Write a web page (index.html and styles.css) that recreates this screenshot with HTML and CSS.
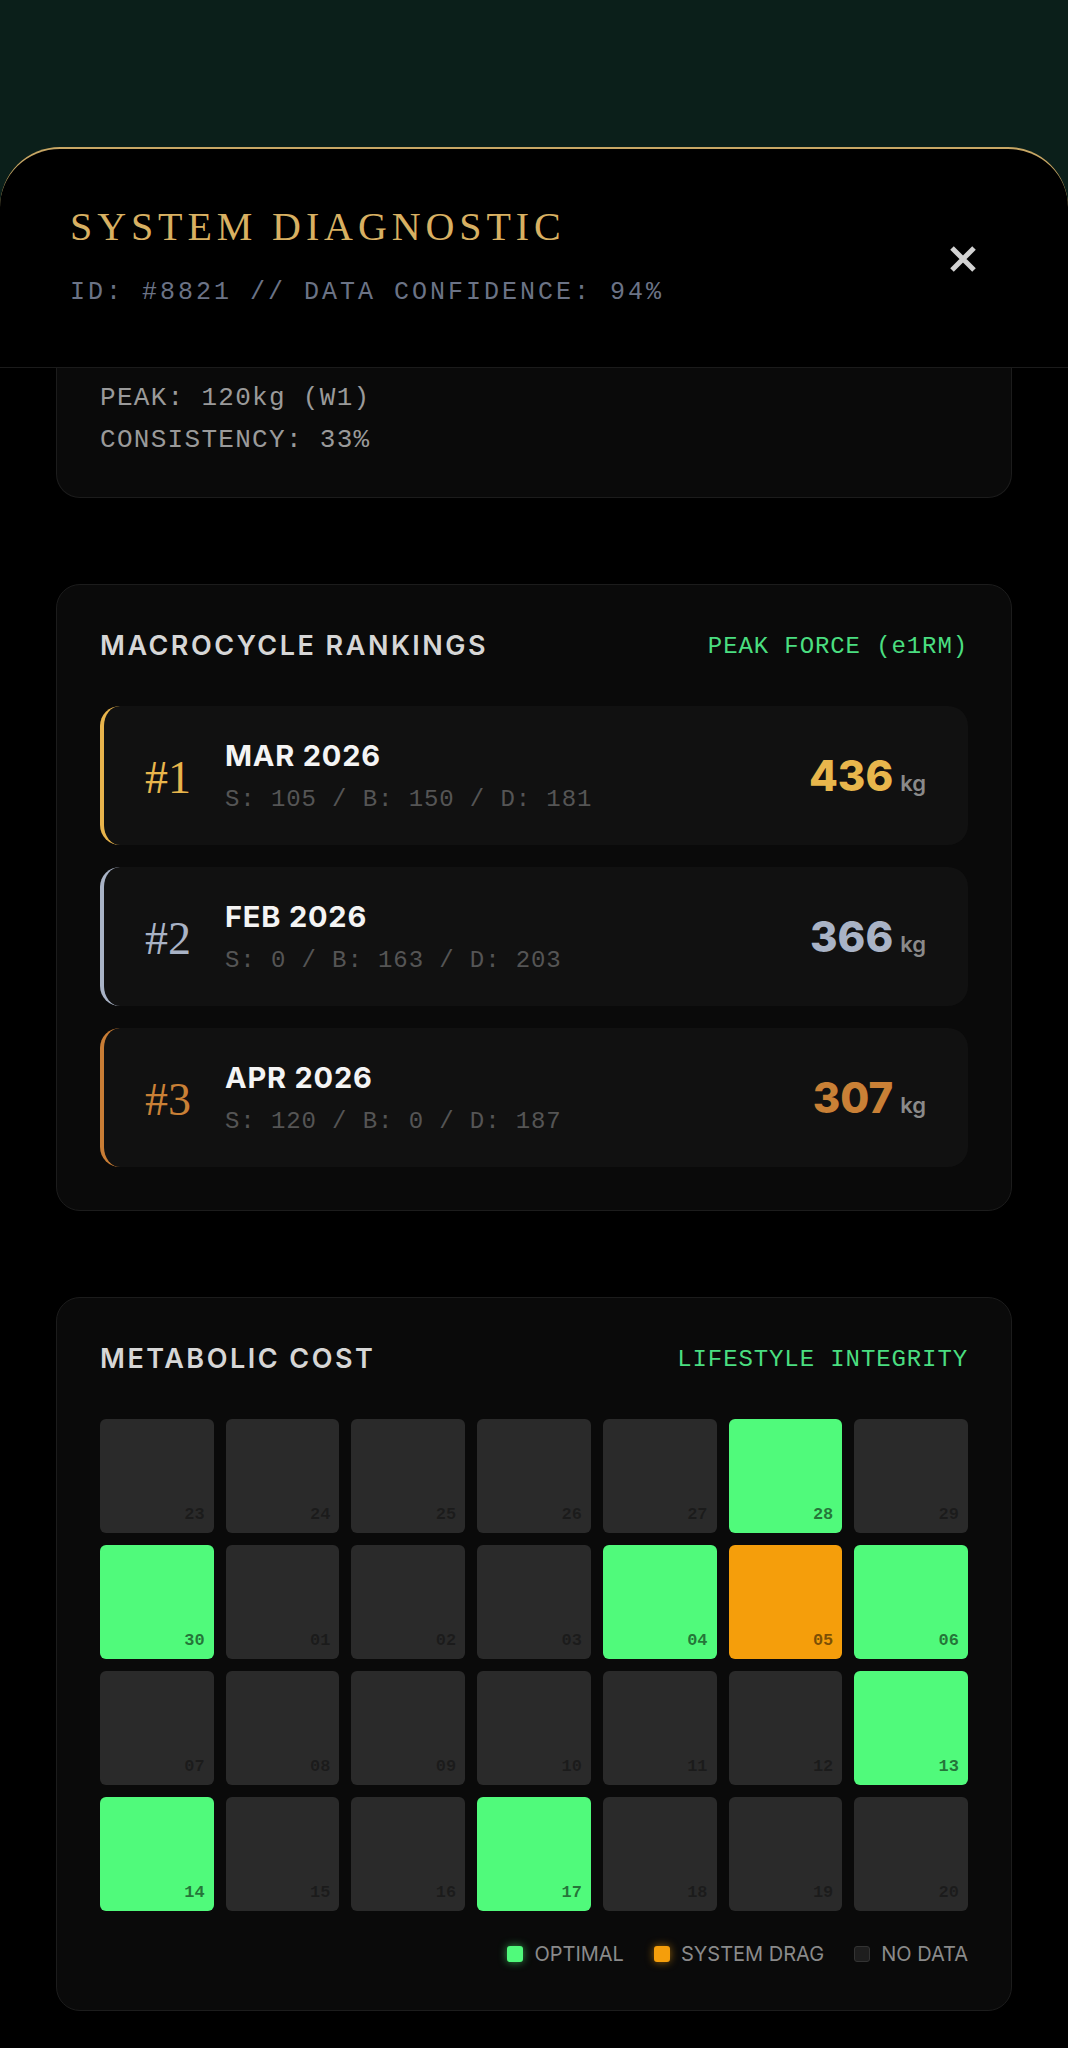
FILE: index.html
```html
<!DOCTYPE html>
<html lang="en">
<head>
    <meta charset="UTF-8">
    <meta name="viewport" content="width=device-width, initial-scale=1.0">
    <title>System Diagnostic</title>
    <link rel="stylesheet" href="styles.css">
</head>
<body>
    <div class="backdrop"></div>

    <div class="sheet">
        <div class="sheet-header">
            <div>
                <h1 class="sheet-title">SYSTEM DIAGNOSTIC</h1>
                <p class="sheet-meta">ID: #8821 // DATA CONFIDENCE: 94%</p>
            </div>
            <button class="close-btn" aria-label="Close">
                <svg width="30" height="30" viewBox="0 0 30 30">
                    <path d="M4 4 L26 26 M26 4 L4 26" stroke="#d2d2d2" stroke-width="5" fill="none"/>
                </svg>
            </button>
        </div>

        <div class="sheet-body">
            <!-- card scrolled under the header -->
            <div class="card card-clipped">
                <p class="stat-line">PEAK: 120kg (W1)</p>
                <p class="stat-line">CONSISTENCY: 33%</p>
            </div>

            <div class="card">
                <div class="card-head">
                    <h2>MACROCYCLE RANKINGS</h2>
                    <span class="card-tag">PEAK FORCE (e1RM)</span>
                </div>

                <div class="rank-list">
                    <div class="rank rank-gold">
                        <span class="rank-no">#1</span>
                        <div class="rank-info">
                            <div class="rank-name">MAR 2026</div>
                            <div class="rank-split">S: 105 / B: 150 / D: 181</div>
                        </div>
                        <div class="rank-total"><span class="rank-value">436</span><span class="rank-unit">kg</span></div>
                    </div>
                    <div class="rank rank-silver">
                        <span class="rank-no">#2</span>
                        <div class="rank-info">
                            <div class="rank-name">FEB 2026</div>
                            <div class="rank-split">S: 0 / B: 163 / D: 203</div>
                        </div>
                        <div class="rank-total"><span class="rank-value">366</span><span class="rank-unit">kg</span></div>
                    </div>
                    <div class="rank rank-bronze">
                        <span class="rank-no">#3</span>
                        <div class="rank-info">
                            <div class="rank-name">APR 2026</div>
                            <div class="rank-split">S: 120 / B: 0 / D: 187</div>
                        </div>
                        <div class="rank-total"><span class="rank-value">307</span><span class="rank-unit">kg</span></div>
                    </div>
                </div>
            </div>

            <div class="card">
                <div class="card-head">
                    <h2>METABOLIC COST</h2>
                    <span class="card-tag">LIFESTYLE INTEGRITY</span>
                </div>

                <div class="day-grid">
                    <div class="day"><span>23</span></div>
                    <div class="day"><span>24</span></div>
                    <div class="day"><span>25</span></div>
                    <div class="day"><span>26</span></div>
                    <div class="day"><span>27</span></div>
                    <div class="day ok"><span>28</span></div>
                    <div class="day"><span>29</span></div>

                    <div class="day ok"><span>30</span></div>
                    <div class="day"><span>01</span></div>
                    <div class="day"><span>02</span></div>
                    <div class="day"><span>03</span></div>
                    <div class="day ok"><span>04</span></div>
                    <div class="day drag"><span>05</span></div>
                    <div class="day ok"><span>06</span></div>

                    <div class="day"><span>07</span></div>
                    <div class="day"><span>08</span></div>
                    <div class="day"><span>09</span></div>
                    <div class="day"><span>10</span></div>
                    <div class="day"><span>11</span></div>
                    <div class="day"><span>12</span></div>
                    <div class="day ok"><span>13</span></div>

                    <div class="day ok"><span>14</span></div>
                    <div class="day"><span>15</span></div>
                    <div class="day"><span>16</span></div>
                    <div class="day ok"><span>17</span></div>
                    <div class="day"><span>18</span></div>
                    <div class="day"><span>19</span></div>
                    <div class="day"><span>20</span></div>
                </div>

                <div class="legend">
                    <span class="legend-item"><i class="swatch swatch-ok"></i>OPTIMAL</span>
                    <span class="legend-item"><i class="swatch swatch-drag"></i>SYSTEM DRAG</span>
                    <span class="legend-item"><i class="swatch swatch-none"></i>NO DATA</span>
                </div>
            </div>
        </div>
    </div>
</body>
</html>
```

FILE: styles.css
```css
* {
    box-sizing: border-box;
}
body {
    margin: 0;
    background: #0b1f1a;
    font-family: Inter, "Liberation Sans", sans-serif;
    color: #ddd;
}
.backdrop {
    height: 147px;
}
.sheet {
    background: #000;
    border-top: 2px solid #c8a765;
    border-radius: 60px 60px 0 0;
    min-height: 1901px;
}

/* header */
.sheet-header {
    display: flex;
    justify-content: space-between;
    align-items: center;
    padding: 54px 85px 59px 70px;
    border-bottom: 1px solid #1b1b1b;
}
.sheet-title {
    margin: 0;
    font-family: "Liberation Serif", serif;
    font-weight: normal;
    font-size: 40px;
    line-height: 48px;
    letter-spacing: 4.9px;
    color: #d8b062;
}
.sheet-meta {
    margin: 27px 0 0;
    font-family: "Liberation Mono", monospace;
    font-size: 25px;
    line-height: 30px;
    letter-spacing: 3px;
    color: #6b7386;
}
.close-btn {
    width: 40px;
    height: 40px;
    margin-top: 6px;
    padding: 0;
    border: none;
    background: none;
    display: flex;
    align-items: center;
    justify-content: center;
    cursor: pointer;
}

/* cards */
.sheet-body {
    padding: 0 56px;
}
.card {
    background: #0a0a0a;
    border: 1px solid #1c1c1c;
    border-radius: 24px;
    padding: 43px;
    margin-bottom: 86px;
}
.card-clipped {
    border-top: none;
    border-radius: 0 0 24px 24px;
    padding: 9px 43px 36px;
}
.stat-line {
    margin: 0;
    font-family: "Liberation Mono", monospace;
    font-size: 26px;
    line-height: 42px;
    letter-spacing: 1.3px;
    color: #9a9a9a;
}
.card-head {
    display: flex;
    justify-content: space-between;
    align-items: center;
    height: 36px;
    margin-bottom: 42px;
}
.card-head h2 {
    margin: 0;
    font-size: 27px;
    line-height: 36px;
    font-weight: 600;
    letter-spacing: 2.5px;
    color: #d6d6d6;
}
.card-tag {
    font-family: "Liberation Mono", monospace;
    font-size: 24px;
    letter-spacing: 0.9px;
    color: #4ade80;
}

/* rankings */
.rank-list {
    display: flex;
    flex-direction: column;
    gap: 22px;
}
.rank {
    display: flex;
    align-items: center;
    gap: 34px;
    height: 139px;
    padding: 0 42px 0 41px;
    background: #111;
    border-radius: 20px;
    border-left: 4px solid;
}
.rank-gold { border-left-color: #e8b44c; }
.rank-silver { border-left-color: #a9b3c6; }
.rank-bronze { border-left-color: #c97d35; }
.rank-no {
    font-family: "Liberation Serif", serif;
    font-size: 46px;
    line-height: 50px;
    margin-top: 4px;
}
.rank-gold .rank-no, .rank-gold .rank-value { color: #e8b64c; }
.rank-silver .rank-no, .rank-silver .rank-value { color: #a9b3c6; }
.rank-bronze .rank-no, .rank-bronze .rank-value { color: #c98036; }
.rank-info {
    flex: 1;
    margin-top: 3px;
}
.rank-name {
    font-size: 29px;
    line-height: 34px;
    font-weight: 700;
    letter-spacing: 0.8px;
    color: #f4f4f4;
}
.rank-split {
    margin-top: 11px;
    font-family: "Liberation Mono", monospace;
    font-size: 24px;
    line-height: 32px;
    letter-spacing: 0.9px;
    color: #555;
}
.rank-total {
    white-space: nowrap;
}
.rank-value {
    font-size: 42px;
    font-weight: 800;
}
.rank-unit {
    margin-left: 7px;
    font-size: 22px;
    font-weight: 600;
    color: #8a8a8a;
}

/* metabolic grid */
.day-grid {
    display: grid;
    grid-template-columns: repeat(7, 1fr);
    grid-auto-rows: 114px;
    gap: 12px;
}
.day {
    display: flex;
    align-items: flex-end;
    justify-content: flex-end;
    padding: 0 9px 9px 0;
    background: #2a2a2a;
    border-radius: 6px;
}
.day span {
    font-family: "Liberation Mono", monospace;
    font-weight: bold;
    font-size: 17px;
    line-height: 18px;
    color: rgba(0,0,0,0.35);
}
.day.ok {
    background: #50fa7b;
}
.day.ok span {
    color: rgba(0,0,0,0.55);
}
.day.drag {
    background: #f59e0b;
}
.day.drag span {
    color: rgba(0,0,0,0.5);
}
.legend {
    display: flex;
    justify-content: flex-end;
    gap: 30px;
    margin-top: 30px;
    font-size: 20px;
    line-height: 26px;
    color: #8a8a8a;
}
.legend-item {
    display: flex;
    align-items: center;
    gap: 11px;
}
.swatch {
    display: block;
    width: 16px;
    height: 16px;
    border-radius: 3px;
}
.swatch-ok {
    background: #50fa7b;
    box-shadow: 0 0 8px rgba(80,250,123,0.6);
}
.swatch-drag {
    background: #f59e0b;
    box-shadow: 0 0 8px rgba(245,158,11,0.6);
}
.swatch-none {
    background: #1e1e1e;
    border: 1px solid #333;
}
```
